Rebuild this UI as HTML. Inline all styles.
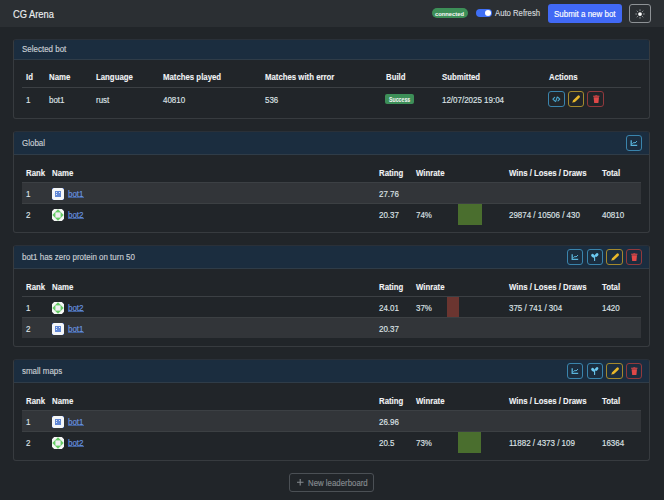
<!DOCTYPE html><html><head><meta charset="utf-8"><style>
*{box-sizing:border-box;margin:0;padding:0}
html,body{width:664px;height:500px;overflow:hidden;background:#212529;color:#dee2e6;font-family:"Liberation Sans",sans-serif;font-size:8.3px;line-height:1}
.t{transform:scaleX(var(--sx,0.96));transform-origin:0 0;-webkit-text-stroke:var(--sw,0.15px) currentColor}
.a{position:absolute;white-space:nowrap}
.card{position:absolute;left:13px;width:637px;border:1px solid #373b3f;border-top-color:#2a3038;border-radius:3px;overflow:hidden}
.ch{position:absolute;left:0;top:0;right:0;background:#1b2d3f;border-bottom:1px solid #2f3c48}
.ht{color:#c9ced3}
.th{font-weight:bold;color:#f1f3f5;--sx:0.94;--sw:0.1px}
.hl{position:absolute;width:619px;background:#323539}
.bl{position:absolute;width:619px;height:1px;background:#3c4044}
.btn{position:absolute;width:16px;height:16px;border:1px solid;border-radius:3px}
.bi{border-color:#3a84ac}
.bw{border-color:#a4892c}
.bd{border-color:#92393c}
.lnk{color:#6a95e0}
.ul{position:absolute;height:1px;background:#41619c}
svg{position:absolute;left:0;top:0;overflow:visible}
</style></head><body>
<div class="a" style="left:0;top:0;width:664px;height:27px;background:#2b2f33"></div>
<div class="a t" style="left:13px;top:9.6px;font-size:10px;--sx:0.93;color:#eceef0">CG Arena</div>
<div class="a" style="left:432px;top:8px;width:36px;height:10px;border-radius:5px;background:#3d8f58"></div>
<div class="a t" style="left:434.5px;top:10.8px;font-size:6.2px;--sx:0.935;--sw:0.05px;font-weight:bold;color:#f4f4f4">connected</div>
<div class="a" style="left:476px;top:9px;width:16px;height:8px;border-radius:4px;background:#3f6ff5"></div>
<div class="a" style="left:485px;top:10px;width:6px;height:6px;border-radius:3px;background:#fff"></div>
<div class="a t ht" style="left:495px;top:9px;--sx:0.93;color:#d4d8dc">Auto Refresh</div>
<div class="a" style="left:548px;top:4px;width:74px;height:19px;border-radius:3px;background:#4169f5"></div>
<div class="a t" style="left:553.5px;top:10px;color:#fff">Submit a new bot</div>
<div class="a" style="left:629px;top:4px;width:22px;height:19px;border-radius:3px;border:1px solid #8e9296"></div>
<svg class="a" style="left:634.8px;top:9.2px" width="10" height="10" viewBox="0 0 16 16"><circle cx="8" cy="8" r="3" fill="#fff"/><g stroke="#a8acb0" stroke-width="1.3" stroke-linecap="round"><path d="M8 1.2v1.4M8 13.4v1.4M1.2 8h1.4M13.4 8h1.4M3.2 3.2l1 1M11.8 11.8l1 1M3.2 12.8l1-1M11.8 4.2l1-1"/></g></svg>
<div class="card" style="top:39px;height:80px"><div class="ch" style="height:20px"></div></div>
<div class="a t ht" style="left:22px;top:45px">Selected bot</div>
<div class="a t th" style="left:25.5px;top:73px">Id</div>
<div class="a t th" style="left:49px;top:73px">Name</div>
<div class="a t th" style="left:95.5px;top:73px">Language</div>
<div class="a t th" style="left:163px;top:73px">Matches played</div>
<div class="a t th" style="left:265px;top:73px">Matches with error</div>
<div class="a t th" style="left:386px;top:73px">Build</div>
<div class="a t th" style="left:442px;top:73px">Submitted</div>
<div class="a t th" style="left:548.5px;top:73px">Actions</div>
<div class="bl" style="left:22px;top:87px"></div>
<div class="a t" style="left:25.5px;top:96px">1</div>
<div class="a t" style="left:49px;top:96px">bot1</div>
<div class="a t" style="left:95.5px;top:96px">rust</div>
<div class="a t" style="left:163px;top:96px">40810</div>
<div class="a t" style="left:265px;top:96px">536</div>
<div class="a t" style="left:442px;top:96px">12/07/2025 19:04</div>
<div class="a" style="left:385px;top:94px;width:29px;height:10px;border-radius:2px;background:#3d8f58"></div>
<div class="a t" style="left:388.8px;top:96.6px;font-size:6.4px;--sx:0.82;--sw:0.05px;font-weight:bold;color:#f4f4f4">Success</div>
<div class="btn bi" style="left:548px;top:91px;width:17px"></div><svg class="a" style="left:548px;top:91px" width="17" height="16" viewBox="0 0 17 16"><path d="M6.7 6.3L4.9 8.1 6.7 9.9M10 6.3L11.8 8.1 10 9.9M9.3 6L7.6 10.6" fill="none" stroke="#4aa8d0" stroke-width="1.1" stroke-linecap="round" stroke-linejoin="round"/></svg>
<div class="btn bw" style="left:568px;top:91px"></div><svg class="a" style="left:568px;top:91px" width="16" height="16" viewBox="0 0 16 16"><path d="M6.3 9.9L10.6 5.7" stroke="#e8b82a" stroke-width="2.6" stroke-linecap="round"/><path d="M4.2 11.7l1-2.8 1.9 1.9z" fill="#e8b82a"/></svg>
<div class="btn bd" style="left:587px;top:91px;width:17px"></div><svg class="a" style="left:587.5px;top:91px" width="16" height="16" viewBox="0 0 16 16"><path d="M5.2 4.7h6.2v1.1H5.2z" fill="#e04848"/><path d="M7.3 4.3h2v.6h-2z" fill="#e04848"/><path d="M5.6 6.2h5.4l-.6 5.7H6.2z" fill="#e04848"/></svg>
<div class="card" style="top:131px;height:102px"><div class="ch" style="height:23px"></div></div>
<div class="a t ht" style="left:22px;top:139px">Global</div>
<div class="btn bi" style="left:626px;top:135px"></div><svg class="a" style="left:626px;top:135px" width="16" height="16" viewBox="0 0 16 16"><path d="M5.2 5.2v5.2h6" fill="none" stroke="#5ab5dc" stroke-width="1.3"/><path d="M6.3 8.7l1.7-1.3 1 .6 2-1.9" fill="none" stroke="#5ab5dc" stroke-width="1"/></svg>
<div class="a t th" style="left:25.5px;top:169px">Rank</div>
<div class="a t th" style="left:52px;top:169px">Name</div>
<div class="a t th" style="left:379px;top:169px">Rating</div>
<div class="a t th" style="left:416px;top:169px">Winrate</div>
<div class="a t th" style="left:509px;top:169px">Wins / Loses / Draws</div>
<div class="a t th" style="left:602px;top:169px">Total</div>
<div class="hl" style="left:22px;top:182.0px;height:21.2px"></div>
<div class="bl" style="left:22px;top:182px;"></div>
<div class="a t" style="left:25.5px;top:190px">1</div>
<svg class="a" style="left:52px;top:188.0px" width="12" height="12" viewBox="0 0 12 12"><rect x="0" y="0" width="12" height="12" rx="1.5" fill="#f4f6f8"/><path d="M0 0h1.5L0 1.5zM12 0v1.5L10.5 0zM0 12v-1.5L1.5 12zM12 12h-1.5L12 10.5z" fill="#3a5ab0"/><rect x="3" y="3" width="6" height="6" fill="#6288d6"/><rect x="4" y="4" width="1" height="1" fill="#dfe7f7"/><rect x="7" y="4" width="1" height="1" fill="#dfe7f7"/><rect x="4" y="6" width="1" height="1" fill="#dfe7f7"/></svg>
<div class="a t lnk" style="left:67.8px;top:190px">bot1</div>
<div class="ul" style="left:68px;top:197px;width:16px"></div>
<div class="a t" style="left:379px;top:190px">27.76</div>
<div class="bl" style="left:22px;top:203px;background:#3c4043"></div>
<div class="a t" style="left:25.5px;top:211px">2</div>
<svg class="a" style="left:52px;top:209.2px" width="12" height="12" viewBox="0 0 12 12"><rect x="0" y="0" width="12" height="12" fill="#f6f7f6"/><path d="M6 0.3L11.7 6 6 11.7 0.3 6z" fill="#66cc66"/><rect x="3.4" y="3.4" width="5.2" height="5.2" fill="#efedf1"/><path d="M0 0h2.2L1.1 1.1 0 2.2zM12 0v2.2L10.9 1.1 9.8 0zM0 12v-2.2L1.1 10.9 2.2 12zM12 12h-2.2L10.9 10.9 12 9.8z" fill="#23262a"/></svg>
<div class="a t lnk" style="left:67.8px;top:211px">bot2</div>
<div class="ul" style="left:68px;top:218px;width:16px"></div>
<div class="a t" style="left:379px;top:211px">20.37</div>
<div class="a t" style="left:416px;top:211px">74%</div>
<div class="a" style="left:458px;top:204.2px;width:24px;height:21px;background:#4a6e2e"></div>
<div class="a t" style="left:509px;top:211px">29874 / 10506 / 430</div>
<div class="a t" style="left:602px;top:211px">40810</div>
<div class="card" style="top:245px;height:102px"><div class="ch" style="height:23px"></div></div>
<div class="a t ht" style="left:22px;top:253px">bot1 has zero protein on turn 50</div>
<div class="btn bi" style="left:567px;top:249px"></div><svg class="a" style="left:567px;top:249px" width="16" height="16" viewBox="0 0 16 16"><path d="M5.2 5.2v5.2h6" fill="none" stroke="#5ab5dc" stroke-width="1.3"/><path d="M6.3 8.7l1.7-1.3 1 .6 2-1.9" fill="none" stroke="#5ab5dc" stroke-width="1"/></svg>
<div class="btn bi" style="left:587px;top:249px"></div><svg class="a" style="left:587px;top:249px" width="16" height="16" viewBox="0 0 16 16"><path d="M7.6 8v3.5" stroke="#6cc8f0" stroke-width="1.1" stroke-linecap="round"/><ellipse cx="6.1" cy="6.8" rx="2.2" ry="1.5" transform="rotate(40 6.1 6.8)" fill="#6cc8f0"/><ellipse cx="9.6" cy="6" rx="2.1" ry="1.4" transform="rotate(-45 9.6 6)" fill="#6cc8f0"/></svg>
<div class="btn bw" style="left:606px;top:249px;width:17px"></div><svg class="a" style="left:606.5px;top:249px" width="16" height="16" viewBox="0 0 16 16"><path d="M6.3 9.9L10.6 5.7" stroke="#e8b82a" stroke-width="2.6" stroke-linecap="round"/><path d="M4.2 11.7l1-2.8 1.9 1.9z" fill="#e8b82a"/></svg>
<div class="btn bd" style="left:626px;top:249px"></div><svg class="a" style="left:626px;top:249px" width="16" height="16" viewBox="0 0 16 16"><path d="M5.2 4.7h6.2v1.1H5.2z" fill="#e04848"/><path d="M7.3 4.3h2v.6h-2z" fill="#e04848"/><path d="M5.6 6.2h5.4l-.6 5.7H6.2z" fill="#e04848"/></svg>
<div class="a t th" style="left:25.5px;top:283px">Rank</div>
<div class="a t th" style="left:52px;top:283px">Name</div>
<div class="a t th" style="left:379px;top:283px">Rating</div>
<div class="a t th" style="left:416px;top:283px">Winrate</div>
<div class="a t th" style="left:509px;top:283px">Wins / Loses / Draws</div>
<div class="a t th" style="left:602px;top:283px">Total</div>
<div class="bl" style="left:22px;top:296px;"></div>
<div class="a t" style="left:25.5px;top:304px">1</div>
<svg class="a" style="left:52px;top:302.0px" width="12" height="12" viewBox="0 0 12 12"><rect x="0" y="0" width="12" height="12" fill="#f6f7f6"/><path d="M6 0.3L11.7 6 6 11.7 0.3 6z" fill="#66cc66"/><rect x="3.4" y="3.4" width="5.2" height="5.2" fill="#efedf1"/><path d="M0 0h2.2L1.1 1.1 0 2.2zM12 0v2.2L10.9 1.1 9.8 0zM0 12v-2.2L1.1 10.9 2.2 12zM12 12h-2.2L10.9 10.9 12 9.8z" fill="#23262a"/></svg>
<div class="a t lnk" style="left:67.8px;top:304px">bot2</div>
<div class="ul" style="left:68px;top:311px;width:16px"></div>
<div class="a t" style="left:379px;top:304px">24.01</div>
<div class="a t" style="left:416px;top:304px">37%</div>
<div class="a" style="left:447px;top:297.0px;width:12px;height:21px;background:#6b3530"></div>
<div class="a t" style="left:509px;top:304px">375 / 741 / 304</div>
<div class="a t" style="left:602px;top:304px">1420</div>
<div class="hl" style="left:22px;top:317.2px;height:21.2px"></div>
<div class="bl" style="left:22px;top:317px;background:#3c4043"></div>
<div class="a t" style="left:25.5px;top:325px">2</div>
<svg class="a" style="left:52px;top:323.2px" width="12" height="12" viewBox="0 0 12 12"><rect x="0" y="0" width="12" height="12" rx="1.5" fill="#f4f6f8"/><path d="M0 0h1.5L0 1.5zM12 0v1.5L10.5 0zM0 12v-1.5L1.5 12zM12 12h-1.5L12 10.5z" fill="#3a5ab0"/><rect x="3" y="3" width="6" height="6" fill="#6288d6"/><rect x="4" y="4" width="1" height="1" fill="#dfe7f7"/><rect x="7" y="4" width="1" height="1" fill="#dfe7f7"/><rect x="4" y="6" width="1" height="1" fill="#dfe7f7"/></svg>
<div class="a t lnk" style="left:67.8px;top:325px">bot1</div>
<div class="ul" style="left:68px;top:332px;width:16px"></div>
<div class="a t" style="left:379px;top:325px">20.37</div>
<div class="card" style="top:359px;height:102px"><div class="ch" style="height:23px"></div></div>
<div class="a t ht" style="left:22px;top:367px">small maps</div>
<div class="btn bi" style="left:567px;top:363px"></div><svg class="a" style="left:567px;top:363px" width="16" height="16" viewBox="0 0 16 16"><path d="M5.2 5.2v5.2h6" fill="none" stroke="#5ab5dc" stroke-width="1.3"/><path d="M6.3 8.7l1.7-1.3 1 .6 2-1.9" fill="none" stroke="#5ab5dc" stroke-width="1"/></svg>
<div class="btn bi" style="left:587px;top:363px"></div><svg class="a" style="left:587px;top:363px" width="16" height="16" viewBox="0 0 16 16"><path d="M7.6 8v3.5" stroke="#6cc8f0" stroke-width="1.1" stroke-linecap="round"/><ellipse cx="6.1" cy="6.8" rx="2.2" ry="1.5" transform="rotate(40 6.1 6.8)" fill="#6cc8f0"/><ellipse cx="9.6" cy="6" rx="2.1" ry="1.4" transform="rotate(-45 9.6 6)" fill="#6cc8f0"/></svg>
<div class="btn bw" style="left:606px;top:363px;width:17px"></div><svg class="a" style="left:606.5px;top:363px" width="16" height="16" viewBox="0 0 16 16"><path d="M6.3 9.9L10.6 5.7" stroke="#e8b82a" stroke-width="2.6" stroke-linecap="round"/><path d="M4.2 11.7l1-2.8 1.9 1.9z" fill="#e8b82a"/></svg>
<div class="btn bd" style="left:626px;top:363px"></div><svg class="a" style="left:626px;top:363px" width="16" height="16" viewBox="0 0 16 16"><path d="M5.2 4.7h6.2v1.1H5.2z" fill="#e04848"/><path d="M7.3 4.3h2v.6h-2z" fill="#e04848"/><path d="M5.6 6.2h5.4l-.6 5.7H6.2z" fill="#e04848"/></svg>
<div class="a t th" style="left:25.5px;top:397px">Rank</div>
<div class="a t th" style="left:52px;top:397px">Name</div>
<div class="a t th" style="left:379px;top:397px">Rating</div>
<div class="a t th" style="left:416px;top:397px">Winrate</div>
<div class="a t th" style="left:509px;top:397px">Wins / Loses / Draws</div>
<div class="a t th" style="left:602px;top:397px">Total</div>
<div class="hl" style="left:22px;top:410.0px;height:21.2px"></div>
<div class="bl" style="left:22px;top:410px;"></div>
<div class="a t" style="left:25.5px;top:418px">1</div>
<svg class="a" style="left:52px;top:416.0px" width="12" height="12" viewBox="0 0 12 12"><rect x="0" y="0" width="12" height="12" rx="1.5" fill="#f4f6f8"/><path d="M0 0h1.5L0 1.5zM12 0v1.5L10.5 0zM0 12v-1.5L1.5 12zM12 12h-1.5L12 10.5z" fill="#3a5ab0"/><rect x="3" y="3" width="6" height="6" fill="#6288d6"/><rect x="4" y="4" width="1" height="1" fill="#dfe7f7"/><rect x="7" y="4" width="1" height="1" fill="#dfe7f7"/><rect x="4" y="6" width="1" height="1" fill="#dfe7f7"/></svg>
<div class="a t lnk" style="left:67.8px;top:418px">bot1</div>
<div class="ul" style="left:68px;top:425px;width:16px"></div>
<div class="a t" style="left:379px;top:418px">26.96</div>
<div class="bl" style="left:22px;top:431px;background:#3c4043"></div>
<div class="a t" style="left:25.5px;top:439px">2</div>
<svg class="a" style="left:52px;top:437.2px" width="12" height="12" viewBox="0 0 12 12"><rect x="0" y="0" width="12" height="12" fill="#f6f7f6"/><path d="M6 0.3L11.7 6 6 11.7 0.3 6z" fill="#66cc66"/><rect x="3.4" y="3.4" width="5.2" height="5.2" fill="#efedf1"/><path d="M0 0h2.2L1.1 1.1 0 2.2zM12 0v2.2L10.9 1.1 9.8 0zM0 12v-2.2L1.1 10.9 2.2 12zM12 12h-2.2L10.9 10.9 12 9.8z" fill="#23262a"/></svg>
<div class="a t lnk" style="left:67.8px;top:439px">bot2</div>
<div class="ul" style="left:68px;top:446px;width:16px"></div>
<div class="a t" style="left:379px;top:439px">20.5</div>
<div class="a t" style="left:416px;top:439px">73%</div>
<div class="a" style="left:458px;top:432.2px;width:23px;height:21px;background:#4a6e2e"></div>
<div class="a t" style="left:509px;top:439px">11882 / 4373 / 109</div>
<div class="a t" style="left:602px;top:439px">16364</div>
<div class="a" style="left:289px;top:473px;width:85px;height:19px;border:1px solid #4b5055;border-radius:3px"></div>
<div class="a t" style="left:307.8px;top:479px;--sx:0.945;color:#868b90">New leaderboard</div>
<svg class="a" style="left:296.5px;top:479px" width="7" height="7"><path d="M3.2 0v6.6M0 3.3h6.5" stroke="#858a8f" stroke-width="1.1"/></svg>
</body></html>
